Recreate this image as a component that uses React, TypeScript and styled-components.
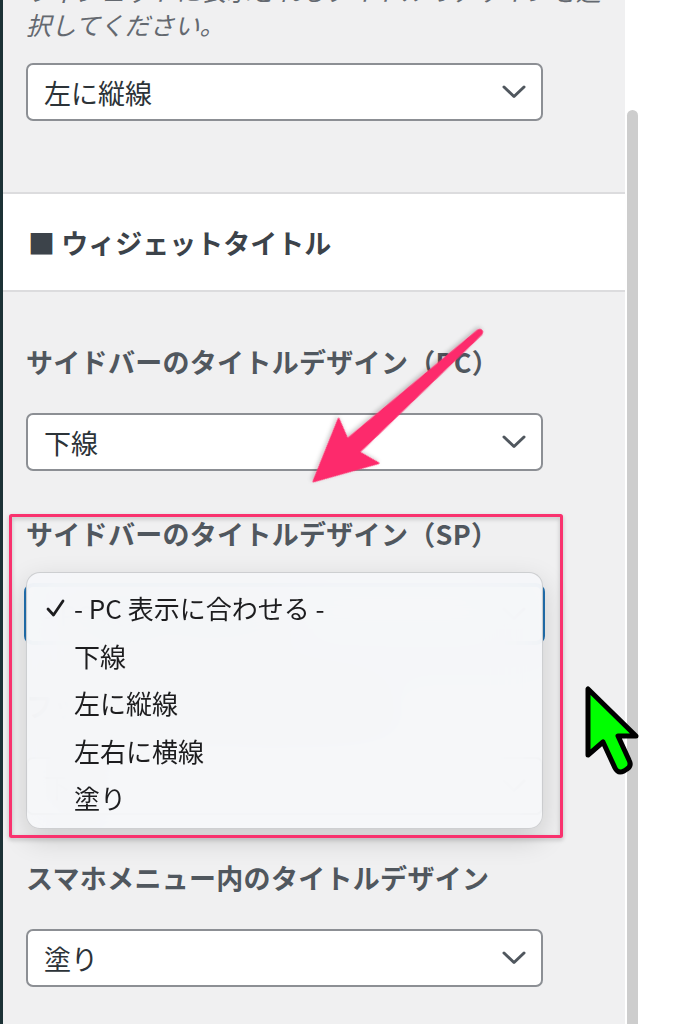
import React from "react";
import styled, { createGlobalStyle, css } from "styled-components";

const GlobalStyle = createGlobalStyle`
  html, body {
    margin: 0;
    padding: 0;
    background: #fff;
  }
  body {
    font-family: "Noto Sans CJK JP", "Noto Sans", sans-serif;
  }
`;

const fields = [
  { label: "サイドバーのタイトルデザイン（PC）", value: "下線" },
  { label: "サイドバーのタイトルデザイン（SP）", value: "- PC 表示に合わせる -", open: true },
  { label: "フッターのタイトルデザイン", value: "下線" },
  { label: "スマホメニュー内のタイトルデザイン", value: "塗り" },
];

const menuOptions = ["- PC 表示に合わせる -", "下線", "左に縦線", "左右に横線", "塗り"];

const Chevron = () => (
  <svg width="24" height="14" viewBox="0 0 24 14">
    <path d="M2 2 L12 11.5 L22 2" fill="none" stroke="#50575e" strokeWidth="3" strokeLinecap="round" strokeLinejoin="round" />
  </svg>
);

const CheckMark = () => (
  <svg width="19" height="18" viewBox="0 0 19 18">
    <path d="M2 10 L7.5 16 L17 2" fill="none" stroke="#1d1d1f" strokeWidth="2.8" strokeLinecap="round" strokeLinejoin="round" />
  </svg>
);

const Select = ({ value, focused }: { value: string; focused?: boolean }) => (
  <SelectBox $focused={focused}>
    <span>{value}</span>
    <Chevron />
  </SelectBox>
);

const Annotations = () => (
  <Overlay width="678" height="1024" viewBox="0 0 678 1024">
    <defs>
      <filter id="soft" x="-20%" y="-20%" width="140%" height="140%">
        <feDropShadow dx="0" dy="2" stdDeviation="2" floodColor="#000" floodOpacity="0.22" />
      </filter>
    </defs>
    <rect x="10.5" y="515.5" width="551" height="321" fill="none" stroke="#f9306e" strokeWidth="3" rx="1" filter="url(#soft)" />
    <g transform="translate(480 332) rotate(138.1)" filter="url(#soft)">
      <path
        d="M0 -2.8 L170 -9 L163 -30 L224 0 L163 30 L170 9 L0 2.8 Z"
        fill="#fd2c6c"
        stroke="#fd2c6c"
        strokeWidth="1.5"
        strokeLinejoin="round"
      />
      <circle cx="0" cy="0" r="3" fill="#fd2c6c" />
    </g>
    <path
      d="M588 689 L588 755 L603 742 L615 768 Q618 774 624 771 L627 769 Q632 766 629 760 L618 736 L636 736 Z"
      fill="#00ff00"
      stroke="#000"
      strokeWidth="5"
      strokeLinejoin="round"
    />
  </Overlay>
);

const App = () => {
  return (
    <>
      <GlobalStyle />
      <Page>
        <EdgeStrip />
        <Panel>
          <TopSection>
            <Description>
              ウィジェットに表示されるタイトルのデザインを選
              <br />
              択してください。
            </Description>
            <Select value="左に縦線" />
          </TopSection>
          <SectionHeading>■ ウィジェットタイトル</SectionHeading>
          <FieldList>
            {fields.map((f) => (
              <Field key={f.label}>
                <Label>{f.label}</Label>
                <SelectWrap>
                  <Select value={f.value} focused={f.open} />
                  {f.open && (
                    <Menu>
                      {menuOptions.map((opt, i) => (
                        <MenuItem key={opt}>
                          <Check>{i === 0 && <CheckMark />}</Check>
                          {opt}
                        </MenuItem>
                      ))}
                    </Menu>
                  )}
                </SelectWrap>
              </Field>
            ))}
          </FieldList>
        </Panel>
        <ScrollTrack>
          <ScrollThumb />
        </ScrollTrack>
        <Annotations />
      </Page>
    </>
  );
};

const Page = styled.div`
  position: relative;
  display: flex;
  width: 678px;
  height: 1024px;
  overflow: hidden;
  background: #fff;
`;

const EdgeStrip = styled.div`
  flex: 0 0 3px;
  background: #1c3236;
`;

const Panel = styled.div`
  flex: 0 0 622px;
  background: #f0f0f1;
  overflow: hidden;
`;

const TopSection = styled.div`
  padding: 0 0 71px 23px;
`;

const Description = styled.p`
  margin: -27px 0 22px;
  font-size: 25px;
  line-height: 34px;
  font-style: italic;
  color: #646970;
  white-space: nowrap;
`;

const SelectBox = styled.div<{ $focused?: boolean }>`
  display: flex;
  align-items: center;
  justify-content: space-between;
  box-sizing: border-box;
  width: 517px;
  height: 58px;
  padding: 0 15px 0 16px;
  background: #fff;
  border: 2px solid #8c8f94;
  border-radius: 7px;
  font-size: 27px;
  color: #2c3338;

  ${(p) =>
    p.$focused &&
    css`
      border-color: #2271b1;
      box-shadow: 0 0 0 2px #2271b1;
    `}
`;

const SectionHeading = styled.h3`
  display: flex;
  align-items: center;
  box-sizing: border-box;
  height: 100px;
  margin: 0;
  padding-left: 25px;
  background: #fff;
  border-top: 2px solid #dcdcde;
  border-bottom: 2px solid #dcdcde;
  font-size: 27px;
  font-weight: 700;
  color: #3c434a;
`;

const FieldList = styled.div`
  padding: 52px 0 0 23px;
`;

const Field = styled.div`
  margin-bottom: 45px;
`;

const Label = styled.div`
  margin-bottom: 33px;
  font-size: 27px;
  line-height: 36px;
  font-weight: 700;
  letter-spacing: 0.3px;
  color: #50575e;
  white-space: nowrap;
`;

const SelectWrap = styled.div`
  position: relative;
  width: 517px;
`;

const Menu = styled.ul`
  position: absolute;
  top: -13px;
  left: 0;
  right: 0;
  z-index: 2;
  margin: 0;
  padding: 11px 0 6px;
  list-style: none;
  background: rgba(246, 247, 249, 0.95);
  backdrop-filter: blur(24px);
  border: 1px solid rgba(0, 0, 0, 0.16);
  border-radius: 14px;
  box-shadow: 0 10px 28px rgba(0, 0, 0, 0.16);
`;

const MenuItem = styled.li`
  display: flex;
  align-items: center;
  height: 47.5px;
  padding-left: 19px;
  font-size: 26px;
  color: #1d1d1f;
  white-space: nowrap;
`;

const Check = styled.span`
  display: flex;
  align-items: center;
  flex: 0 0 28px;
`;

const ScrollTrack = styled.div`
  flex: 1;
  display: flex;
  flex-direction: column;
  padding: 110px 0 0 2px;
`;

const ScrollThumb = styled.div`
  flex: 1;
  width: 11px;
  background: #cdcdcd;
  border-radius: 6px 6px 0 0;
`;

const Overlay = styled.svg`
  position: absolute;
  top: 0;
  left: 0;
  pointer-events: none;
  z-index: 5;
`;

export default App;
